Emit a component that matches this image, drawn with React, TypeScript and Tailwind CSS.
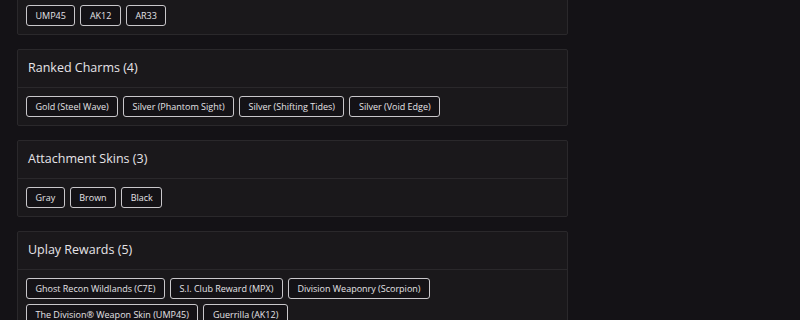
const sections = [
  { title: "", items: ["UMP45", "AK12", "AR33"] },
  {
    title: "Ranked Charms (4)",
    items: ["Gold (Steel Wave)", "Silver (Phantom Sight)", "Silver (Shifting Tides)", "Silver (Void Edge)"],
  },
  { title: "Attachment Skins (3)", items: ["Gray", "Brown", "Black"] },
  {
    title: "Uplay Rewards (5)",
    items: [
      "Ghost Recon Wildlands (C7E)",
      "S.I. Club Reward (MPX)",
      "Division Weaponry (Scorpion)",
      "The Division® Weapon Skin (UMP45)",
      "Guerrilla (AK12)",
    ],
  },
];

function Section({ title, items }: { title: string; items: string[] }) {
  return (
    <section className="bg-[#1a181b] border border-[#2a282b] rounded-[2px]">
      <div className="h-[38px] flex items-center px-[10px] border-b border-[#2a282b]">
        {title && <h3 className="text-[12.5px] text-[#e6e4e8] font-medium">{title}</h3>}
      </div>
      <div className="flex flex-wrap gap-[5px] px-[8px] pt-[8px] pb-[8px]">
        {items.map((item) => (
          <span
            key={item}
            className="h-[21px] flex items-center px-[8.5px] rounded-[3px] border border-[#c9c7cb] bg-[#141216] text-[9px] text-[#e4e2e6]"
          >
            {item}
          </span>
        ))}
      </div>
    </section>
  );
}

export default function App() {
  return (
    <div className="w-[800px] h-[320px] overflow-hidden bg-[#141216]" style={{ fontFamily: "'Open Sans', 'Noto Sans', sans-serif" }}>
      <div className="w-[551px] ml-[17px] -mt-[42px] flex flex-col gap-[14px]">
        {sections.map((s, i) => (
          <Section key={i} title={s.title} items={s.items} />
        ))}
      </div>
    </div>
  );
}
